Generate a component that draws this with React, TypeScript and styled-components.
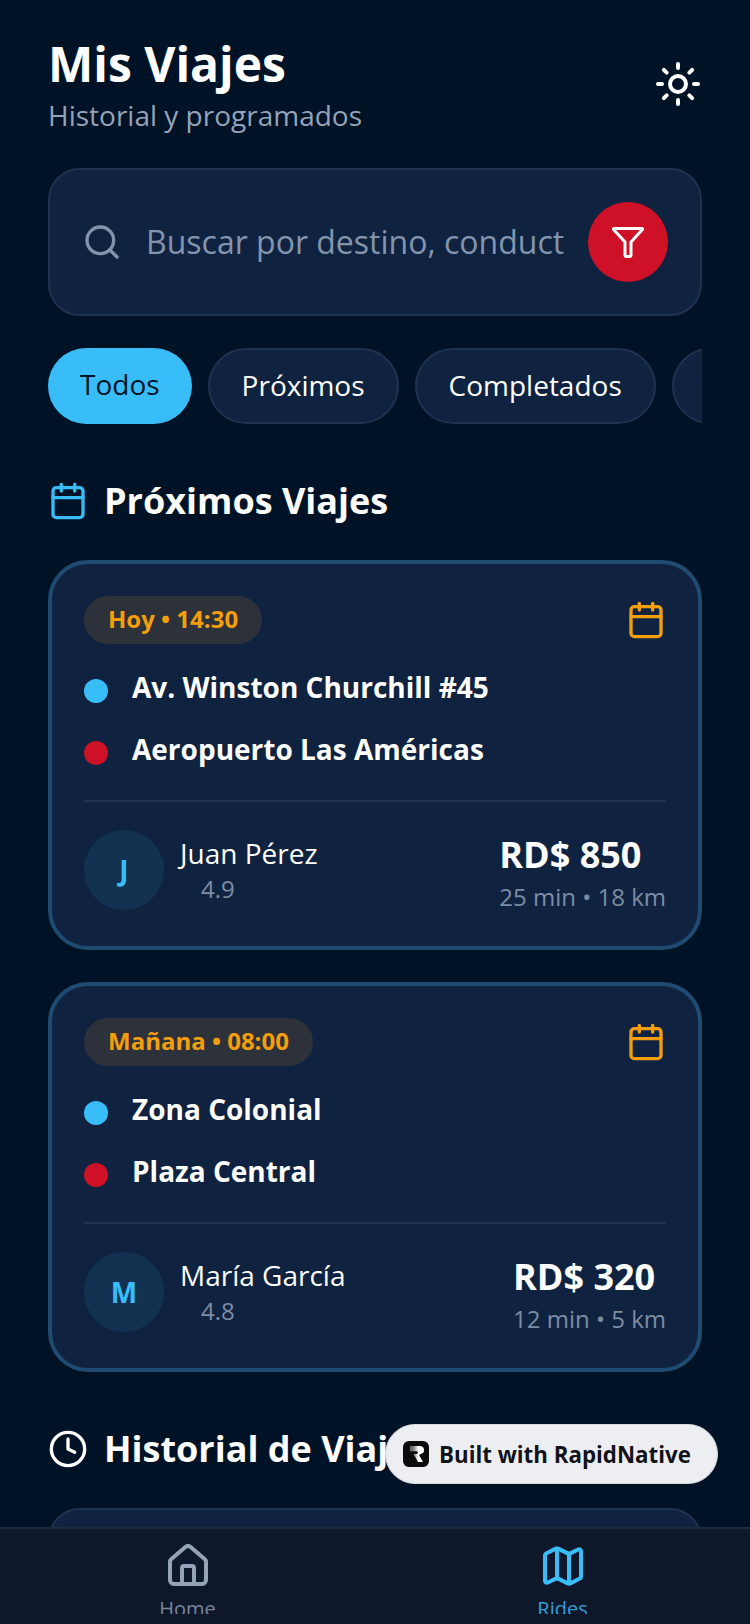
import React from "react";
import styled, { createGlobalStyle } from "styled-components";
import { Calendar, Clock, House, Map as MapIcon, Search, Sun } from "lucide-react";

const GlobalStyle = createGlobalStyle`
  html, body {
    margin: 0;
    padding: 0;
    background: #001226;
  }
  * {
    box-sizing: border-box;
  }
`;

const trips = [
  { when: "Hoy • 14:30", from: "Av. Winston Churchill #45", to: "Aeropuerto Las Américas", initial: "J", driver: "Juan Pérez", rating: "4.9", price: "RD$ 850", meta: "25 min • 18 km" },
  { when: "Mañana • 08:00", from: "Zona Colonial", to: "Plaza Central", initial: "M", driver: "María García", rating: "4.8", price: "RD$ 320", meta: "12 min • 5 km" },
];

export default function App() {
  return (
    <Screen>
      <GlobalStyle />
      <Scroll>
        <Header>
          <HeaderText>
            <Title>Mis Viajes</Title>
            <Subtitle>Historial y programados</Subtitle>
          </HeaderText>
          <Sun size={48} color="#ffffff" strokeWidth={2} />
        </Header>

        <SearchBox>
          <Search size={40} color="#8494ad" strokeWidth={2} />
          <SearchText>Buscar por destino, conductor...</SearchText>
          <FilterButton>
            <svg width="40" height="40" viewBox="0 0 40 40" fill="none" stroke="#ffffff" strokeWidth="3" strokeLinejoin="round">
              <path d="M6 6.500h28a.6.6 0 0 1 .4 1L23 20v13a1.500 1.500 0 0 1-1.500 1.500h-3A1.500 1.500 0 0 1 17 33V20L5.600 7.500a.6.6 0 0 1 .4-1z" />
            </svg>
          </FilterButton>
        </SearchBox>

        <Pills>
          <Pill $active>Todos</Pill>
          <Pill>Próximos</Pill>
          <Pill>Completados</Pill>
          <Pill>Cancelados</Pill>
        </Pills>

        <SectionTitle>
          <Calendar size={40} color="#38bdf8" strokeWidth={2} />
          <h2>Próximos Viajes</h2>
        </SectionTitle>

        {trips.map((t) => (
          <TripCard key={t.driver}>
            <CardTop>
              <WhenBadge>{t.when}</WhenBadge>
              <Calendar size={40} color="#f59e0b" strokeWidth={2} />
            </CardTop>
            <Stop>
              <Dot $color="#38bdf8" />
              <StopName>{t.from}</StopName>
            </Stop>
            <Stop>
              <Dot $color="#ce1126" />
              <StopName>{t.to}</StopName>
            </Stop>
            <Divider />
            <CardBottom>
              <Driver>
                <Avatar>{t.initial}</Avatar>
                <DriverInfo>
                  <DriverName>{t.driver}</DriverName>
                  <Rating>{t.rating}</Rating>
                </DriverInfo>
              </Driver>
              <Fare>
                <Price>{t.price}</Price>
                <Meta>{t.meta}</Meta>
              </Fare>
            </CardBottom>
          </TripCard>
        ))}

        <SectionTitle>
          <Clock size={40} color="#ffffff" strokeWidth={2} />
          <h2>Historial de Viajes</h2>
        </SectionTitle>
        <HistoryCard />
      </Scroll>

      <BuiltBadge>
        <BuiltLogo>
          <svg width="26" height="26" viewBox="0 0 26 26">
            <defs>
              <linearGradient id="logoShade" x1="0" x2="1" y1="0" y2="0">
                <stop offset="0.2" stopColor="#6f6f6f" />
                <stop offset="0.6" stopColor="#ffffff" />
              </linearGradient>
            </defs>
            <path d="M7 5h10a4 4 0 0 1 2 7.500l-3 1.500 4 7h-5l-4.500-8h3a1.300 1.300 0 0 0 0-2.800H7z" fill="url(#logoShade)" />
          </svg>
        </BuiltLogo>
        Built with RapidNative
      </BuiltBadge>

      <TabBar>
        <Tab>
          <House size={48} color="#94a3b8" strokeWidth={2} />
          <TabLabel>Home</TabLabel>
        </Tab>
        <Tab $active>
          <MapIcon size={48} color="#38bdf8" strokeWidth={2} />
          <TabLabel>Rides</TabLabel>
        </Tab>
      </TabBar>
    </Screen>
  );
}

const Screen = styled.div`
  position: relative;
  width: 750px;
  height: 1624px;
  overflow: hidden;
  display: flex;
  flex-direction: column;
  background: #001226;
  font-family: "Open Sans", "Noto Sans", sans-serif;
  color: #ffffff;
`;

const Scroll = styled.main`
  flex: 1;
  min-height: 0;
  overflow: hidden;
  padding: 32px 48px 0;
`;

const Header = styled.header`
  display: flex;
  justify-content: space-between;
  align-items: center;
  height: 104px;
`;

const HeaderText = styled.div`
  align-self: flex-start;
`;

const Title = styled.h1`
  margin: 0;
  font-size: 48px;
  line-height: 64px;
  font-weight: 700;
`;

const Subtitle = styled.p`
  margin: -1px 0 0;
  font-size: 28px;
  line-height: 40px;
  color: #94a3b8;
`;

const SearchBox = styled.div`
  display: flex;
  align-items: center;
  height: 148px;
  margin-top: 32px;
  padding: 0 32px;
  background: #0f2340;
  border: 2px solid #1e3350;
  border-radius: 32px;
`;

const SearchText = styled.div`
  flex: 1;
  min-width: 0;
  margin: 0 24px;
  padding-bottom: 2px;
  overflow: hidden;
  white-space: nowrap;
  font-size: 32px;
  color: #8494ad;
`;

const FilterButton = styled.div`
  flex: none;
  width: 80px;
  height: 80px;
  display: flex;
  align-items: center;
  justify-content: center;
  border-radius: 50%;
  background: #ce1126;
`;

const Pills = styled.div`
  display: flex;
  gap: 16px;
  margin-top: 32px;
  overflow: hidden;
`;

const Pill = styled.div<{ $active?: boolean }>`
  flex: none;
  height: 76px;
  padding: ${(p) => (p.$active ? "0 32px 4px" : "0 32px 2px")};
  display: flex;
  align-items: center;
  border-radius: 40px;
  font-size: 28px;
  background: ${(p) => (p.$active ? "#38bdf8" : "#0f2340")};
  border: ${(p) => (p.$active ? "none" : "2px solid #1e3350")};
  color: ${(p) => (p.$active ? "#001226" : "#ffffff")};
`;

const SectionTitle = styled.div`
  display: flex;
  align-items: center;
  gap: 16px;
  margin-top: 53px;
  margin-bottom: 35px;

  h2 {
    margin: 0;
    font-size: 36px;
    line-height: 48px;
    font-weight: 700;
    white-space: nowrap;
  }
`;

const TripCard = styled.article`
  height: 390px;
  margin-bottom: 32px;
  padding: 32px;
  background: #0f2340;
  border: 4px solid #1f4a72;
  border-radius: 40px;
`;

const CardTop = styled.div`
  display: flex;
  justify-content: space-between;
  align-items: center;
  margin-bottom: 16px;
`;

const WhenBadge = styled.div`
  height: 48px;
  padding: 0 24px 3px;
  display: flex;
  align-items: center;
  border-radius: 24px;
  background: #2d323a;
  color: #f59e0b;
  font-size: 24px;
  font-weight: 700;
`;

const Stop = styled.div`
  display: flex;
  align-items: center;
  gap: 24px;
  height: 62px;
`;

const Dot = styled.span<{ $color: string }>`
  flex: none;
  width: 24px;
  height: 24px;
  border-radius: 50%;
  background: ${(p) => p.$color};
`;

const StopName = styled.div`
  padding-bottom: 8px;
  font-size: 28px;
  font-weight: 700;
`;

const Divider = styled.div`
  height: 2px;
  margin: 16px 0 25px;
  background: #1e3350;
`;

const CardBottom = styled.div`
  display: flex;
  justify-content: space-between;
  align-items: center;
`;

const Driver = styled.div`
  display: flex;
  align-items: center;
  gap: 16px;
`;

const DriverInfo = styled.div`
  padding-bottom: 2px;
`;

const Avatar = styled.div`
  width: 80px;
  height: 80px;
  display: flex;
  align-items: center;
  justify-content: center;
  border-radius: 50%;
  background: #133252;
  color: #38bdf8;
  font-size: 28px;
  font-weight: 700;
`;

const DriverName = styled.div`
  font-size: 28px;
  line-height: 40px;
`;

const Rating = styled.div`
  padding-left: 21px;
  font-size: 24px;
  line-height: 32px;
  color: #7d8ca5;
`;

const Fare = styled.div`
  display: flex;
  flex-direction: column;
  align-items: flex-start;
  padding-top: 4px;
`;

const Price = styled.div`
  font-size: 36px;
  line-height: 48px;
  font-weight: 700;
`;

const Meta = styled.div`
  margin-top: 2px;
  font-size: 24px;
  line-height: 32px;
  color: #7d8ca5;
`;

const HistoryCard = styled.div`
  height: 120px;
  background: #0f2340;
  border: 2px solid #1e3350;
  border-radius: 32px;
`;

const BuiltBadge = styled.div`
  position: absolute;
  left: 385px;
  top: 1424px;
  width: 333px;
  height: 60px;
  display: flex;
  align-items: center;
  gap: 10px;
  padding-left: 17px;
  border-radius: 30px;
  border: 1px solid #d6d9df;
  background: #eceef2;
  color: #111318;
  font-size: 22.3px;
  font-weight: 700;
  white-space: nowrap;
`;

const BuiltLogo = styled.span`
  width: 26px;
  height: 26px;
  display: flex;
  border-radius: 6px;
  background: #0b0b0b;
`;

const TabBar = styled.nav`
  flex: none;
  height: 97px;
  display: flex;
  align-items: flex-start;
  background: #0f172a;
  border-top: 2px solid #1e293b;
`;

const Tab = styled.div<{ $active?: boolean }>`
  flex: 1;
  height: 85px;
  overflow: hidden;
  display: flex;
  flex-direction: column;
  align-items: center;
  padding-top: 13px;
  color: ${(p) => (p.$active ? "#2f9fd8" : "#77879d")};

  svg {
    flex: none;
  }
`;

const TabLabel = styled.div`
  flex: none;
  margin-top: 5px;
  font-size: 20px;
  line-height: 28px;
`;
